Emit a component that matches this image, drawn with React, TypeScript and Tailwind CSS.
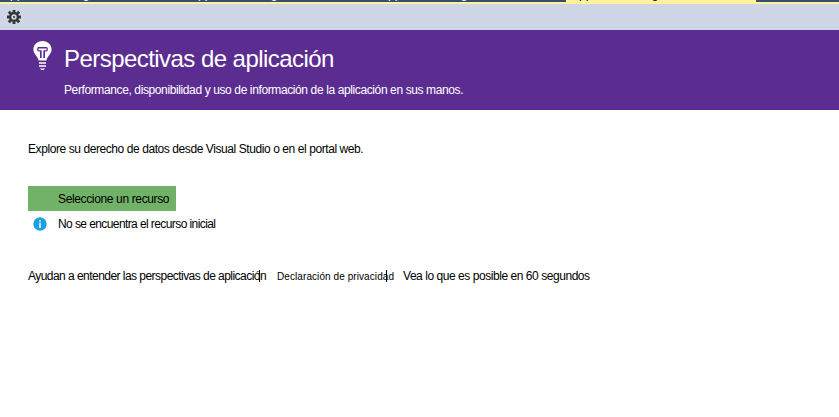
import React from "react";

const tabs = [
  { width: "w-[188px]", active: false },
  { width: "w-[190px]", active: false },
  { width: "w-[188px]", active: false },
  { width: "w-[190px]", active: true },
];

function DocumentTabs() {
  return (
    <div className="flex h-1 shrink-0 overflow-hidden border-b-2 border-[#fff29d] bg-[#364e6f] text-[12px] leading-[14px]">
      {tabs.map((tab, i) => (
        <div
          key={i}
          className={`${tab.width} h-[2px] shrink-0 overflow-hidden whitespace-nowrap ${
            tab.active ? "bg-[#fff29d] pl-[5px] text-black" : "pl-[2px] text-white"
          }`}
        >
          <div className="-mt-[13px]">Application Insights</div>
        </div>
      ))}
    </div>
  );
}

function GearIcon() {
  return (
    <svg width="14" height="14" viewBox="0 0 14 14" fill="none">
      <circle cx="7" cy="7" r="3.900" stroke="#343434" strokeWidth="2.400" />
      <circle cx="7" cy="7" r="1" fill="#343434" />
      <path
        d="M7 0v2.500M7 11.500V14M0 7h2.500M11.500 7H14M1.800 1.800l2 2M10.200 10.200l2 2M1.800 12.200l2-2M10.200 3.800l2-2"
        stroke="#343434"
        strokeWidth="2.800"
      />
    </svg>
  );
}

function BulbIcon() {
  return (
    <svg width="19" height="30" viewBox="0 0 19 30" fill="none">
      <path
        d="M9.500 0C4.200 0 .4 3.700.4 8.500c0 4.600 4.300 6.400 5.200 11h7.800c.9-4.600 5.200-6.400 5.200-11C18.600 3.700 14.800 0 9.500 0Z"
        fill="#fff"
      />
      <path d="M5.500 6h8q1.300 0 1.300 1.500v1.500q0 1.500-1.800 1.500h-1V17H7v-6.500H6q-1.800 0-1.800-1.500V7.500Q4.200 6 5.500 6Z" fill="#5c2d91" />
      <path d="M5.500 8.300h8M9.500 8.300V17" stroke="#fff" strokeWidth="1.700" />
      <path d="M6 22h7M6 25h7" stroke="#fff" strokeWidth="1.700" />
      <path d="M7 27.500h5L10.500 29h-2Z" fill="#fff" />
    </svg>
  );
}

function InfoIcon() {
  return (
    <svg width="14" height="14" viewBox="0 0 14 14">
      <circle cx="7" cy="7" r="6.700" fill="#1ba1e2" />
      <path d="M6.300 3h1.400v1.500H6.300zM6.300 5.500h1.400v5.500H6.300z" fill="#fff" />
    </svg>
  );
}

export default function App() {
  return (
    <div className="flex h-[417px] w-[839px] flex-col overflow-hidden bg-white font-['Liberation_Sans',Arial,sans-serif] text-[12px] leading-4 text-black">
      <DocumentTabs />
      <div className="flex h-[26px] shrink-0 items-center bg-[#cfd6e5] pl-[7px]">
        <GearIcon />
      </div>
      <header className="flex h-20 shrink-0 bg-[#5c2d91] pl-[33px] text-white">
        <div className="w-[31px] pt-[11px]">
          <BulbIcon />
        </div>
        <div className="whitespace-nowrap pt-[15px]">
          <h1 className="text-[24px] leading-7 tracking-[-0.55px]">Perspectivas de aplicación</h1>
          <p className="mt-[9px] tracking-[-0.385px]">
            Performance, disponibilidad y uso de información de la aplicación en sus manos.
          </p>
        </div>
      </header>
      <main className="flex flex-col items-start whitespace-nowrap pl-7 pt-[31px]">
        <p className="tracking-[-0.42px]">Explore su derecho de datos desde Visual Studio o en el portal web.</p>
        <button className="mt-[29px] h-[25px] w-[148px] bg-[#71b168] pl-[30px] text-left tracking-[-0.36px]">
          Seleccione un recurso
        </button>
        <div className="mt-[5px] flex h-4 items-center pl-[5px]">
          <InfoIcon />
          <span className="pl-[11px] tracking-[-0.59px]">No se encuentra el recurso inicial</span>
        </div>
        <div className="mt-9 flex h-4 items-center">
          <a className="w-[231px] tracking-[-0.54px]">Ayudan a entender las perspectivas de aplicación</a>
          <span className="h-3 w-px bg-black" />
          <a className="ml-[17px] w-[109px] pt-px text-[10px] tracking-[0.08px]">Declaración de privacidad</a>
          <span className="h-3 w-px bg-black" />
          <a className="ml-4 tracking-[-0.45px]">Vea lo que es posible en 60 segundos</a>
        </div>
      </main>
    </div>
  );
}
